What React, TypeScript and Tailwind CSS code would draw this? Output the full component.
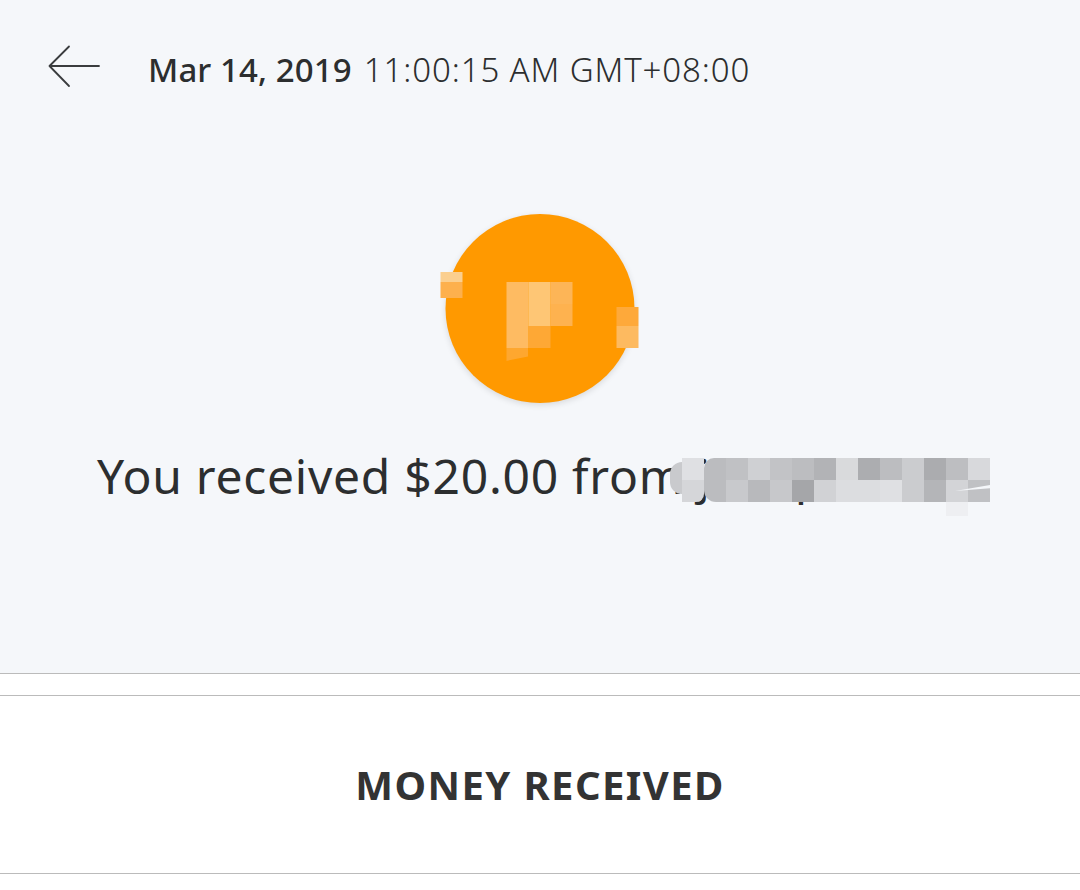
const rowA = ["bg-[#dfe0e3]","bg-[#bbbcbf] rounded-tl-[10px]","bg-[#c0c1c4]","bg-[#cfd0d3]","bg-[#c2c3c6]","bg-[#bcbdc0]","bg-[#b2b3b6]","bg-[#d9dadc]","bg-[#acadb0]","bg-[#bcbdc0]","bg-[#cbcccf]","bg-[#abacaf]","bg-[#bdbec1]","bg-[#d8d9dc]"];
const rowB = ["bg-[#d5d6d9] rounded-br-[8px]","bg-[#bbbcbf] rounded-bl-[12px]","bg-[#c8c9cc]","bg-[#b8b9bc]","bg-[#c7c8cb]","bg-[#a5a6a9]","bg-[#d1d2d5]","bg-[#dcdde0]","bg-[#dcdde0]","bg-[#dfe0e3]","bg-[#cbcccf]","bg-[#b4b5b8]","bg-[#d3d4d7]","bg-[#c0c1c4]"];

export default function App() {
  return (
    <div className="w-[1080px] h-[890px] overflow-hidden bg-white text-[#2c2e2f] font-['Noto_Sans','Open_Sans',sans-serif]">
      <section className="relative h-[674px] bg-[#f5f7fa] border-b border-[#bbbbbb]">
        <header className="flex items-center pt-[40px] pl-[48px]">
          <svg width="52" height="44" viewBox="0 0 52 44" fill="none" stroke="#3a3c3e" strokeWidth="1.8" strokeLinecap="round" strokeLinejoin="round" className="shrink-0">
            <path d="M51 22H1.5M21 2.5 1.5 22 21 42" />
          </svg>
          <div className="ml-[48px] pt-[8px] whitespace-nowrap text-[33px] leading-[44px]">
            <span className="font-medium tracking-[0.1px]">Mar 14, 2019</span>
            <span className="ml-[12px] font-light tracking-[0.9px]">11:00:15 AM GMT+08:00</span>
          </div>
        </header>

        <div className="relative mt-[122px] mx-auto w-[189px] h-[189px] -translate-x-[0.5px] rounded-full bg-[#ff9900] shadow-[0_2px_6px_rgba(0,0,0,0.12)]">
          <div className="absolute left-[61px] top-[68px] grid grid-cols-[repeat(3,22px)] grid-rows-[repeat(3,22px)_13px]">
            <div className="row-span-3 bg-[#febb62]" />
            <div className="row-span-2 bg-[#fec675]" />
            <div className="bg-[#fdb557]" />
            <div className="bg-[#feb24f]" />
            <div className="bg-[#fea835]" />
            <div />
            <div className="bg-[#fea72f] [clip-path:polygon(0_0,100%_0,100%_65%,0_100%)]" />
          </div>
          <div className="absolute -left-[5px] top-[58px] flex w-[22px] flex-col">
            <div className="h-[10px] bg-[#fbcf8f]" />
            <div className="h-[16px] bg-[#fdb04d]" />
          </div>
          <div className="absolute left-[171px] top-[93px] flex w-[22px] flex-col">
            <div className="h-[19px] bg-[#fea93a]" />
            <div className="h-[22px] bg-[#fdba60]" />
          </div>
        </div>

        <p className="relative mt-[41px] pl-[97px] whitespace-nowrap text-[48px] leading-[64px] tracking-[0.73px]">
          You received $20.00 from <span>j</span><span className="ml-[84px]">p</span>
          <span className="absolute left-[670px] top-[14px] flex">
            <span className="mt-[4px] w-[12px] h-[32px] rounded-l-full bg-[#c9cacd]" />
            <span className="grid grid-cols-[repeat(14,22px)] grid-rows-[22px_22px_14px]">
              {rowA.map((c, i) => <span key={`a${i}`} className={c} />)}
              {rowB.map((c, i) => <span key={`b${i}`} className={c} />)}
              <span className="col-start-13 bg-[#eeeff2]" />
            </span>
            <span className="absolute left-[285px] top-[27px] w-[35px] h-[6px] bg-[#f5f7fa] [clip-path:polygon(0_100%,100%_0,100%_55%)]" />
          </span>
        </p>
      </section>

      <div className="h-[22px] bg-white border-b border-[#bbbbbb]" />

      <section className="h-[178px] bg-white border-b border-[#bbbbbb] flex items-center justify-center">
        <h2 className="text-[40px] leading-none font-bold tracking-[1.4px] text-[#333333]">MONEY RECEIVED</h2>
      </section>
    </div>
  );
}
